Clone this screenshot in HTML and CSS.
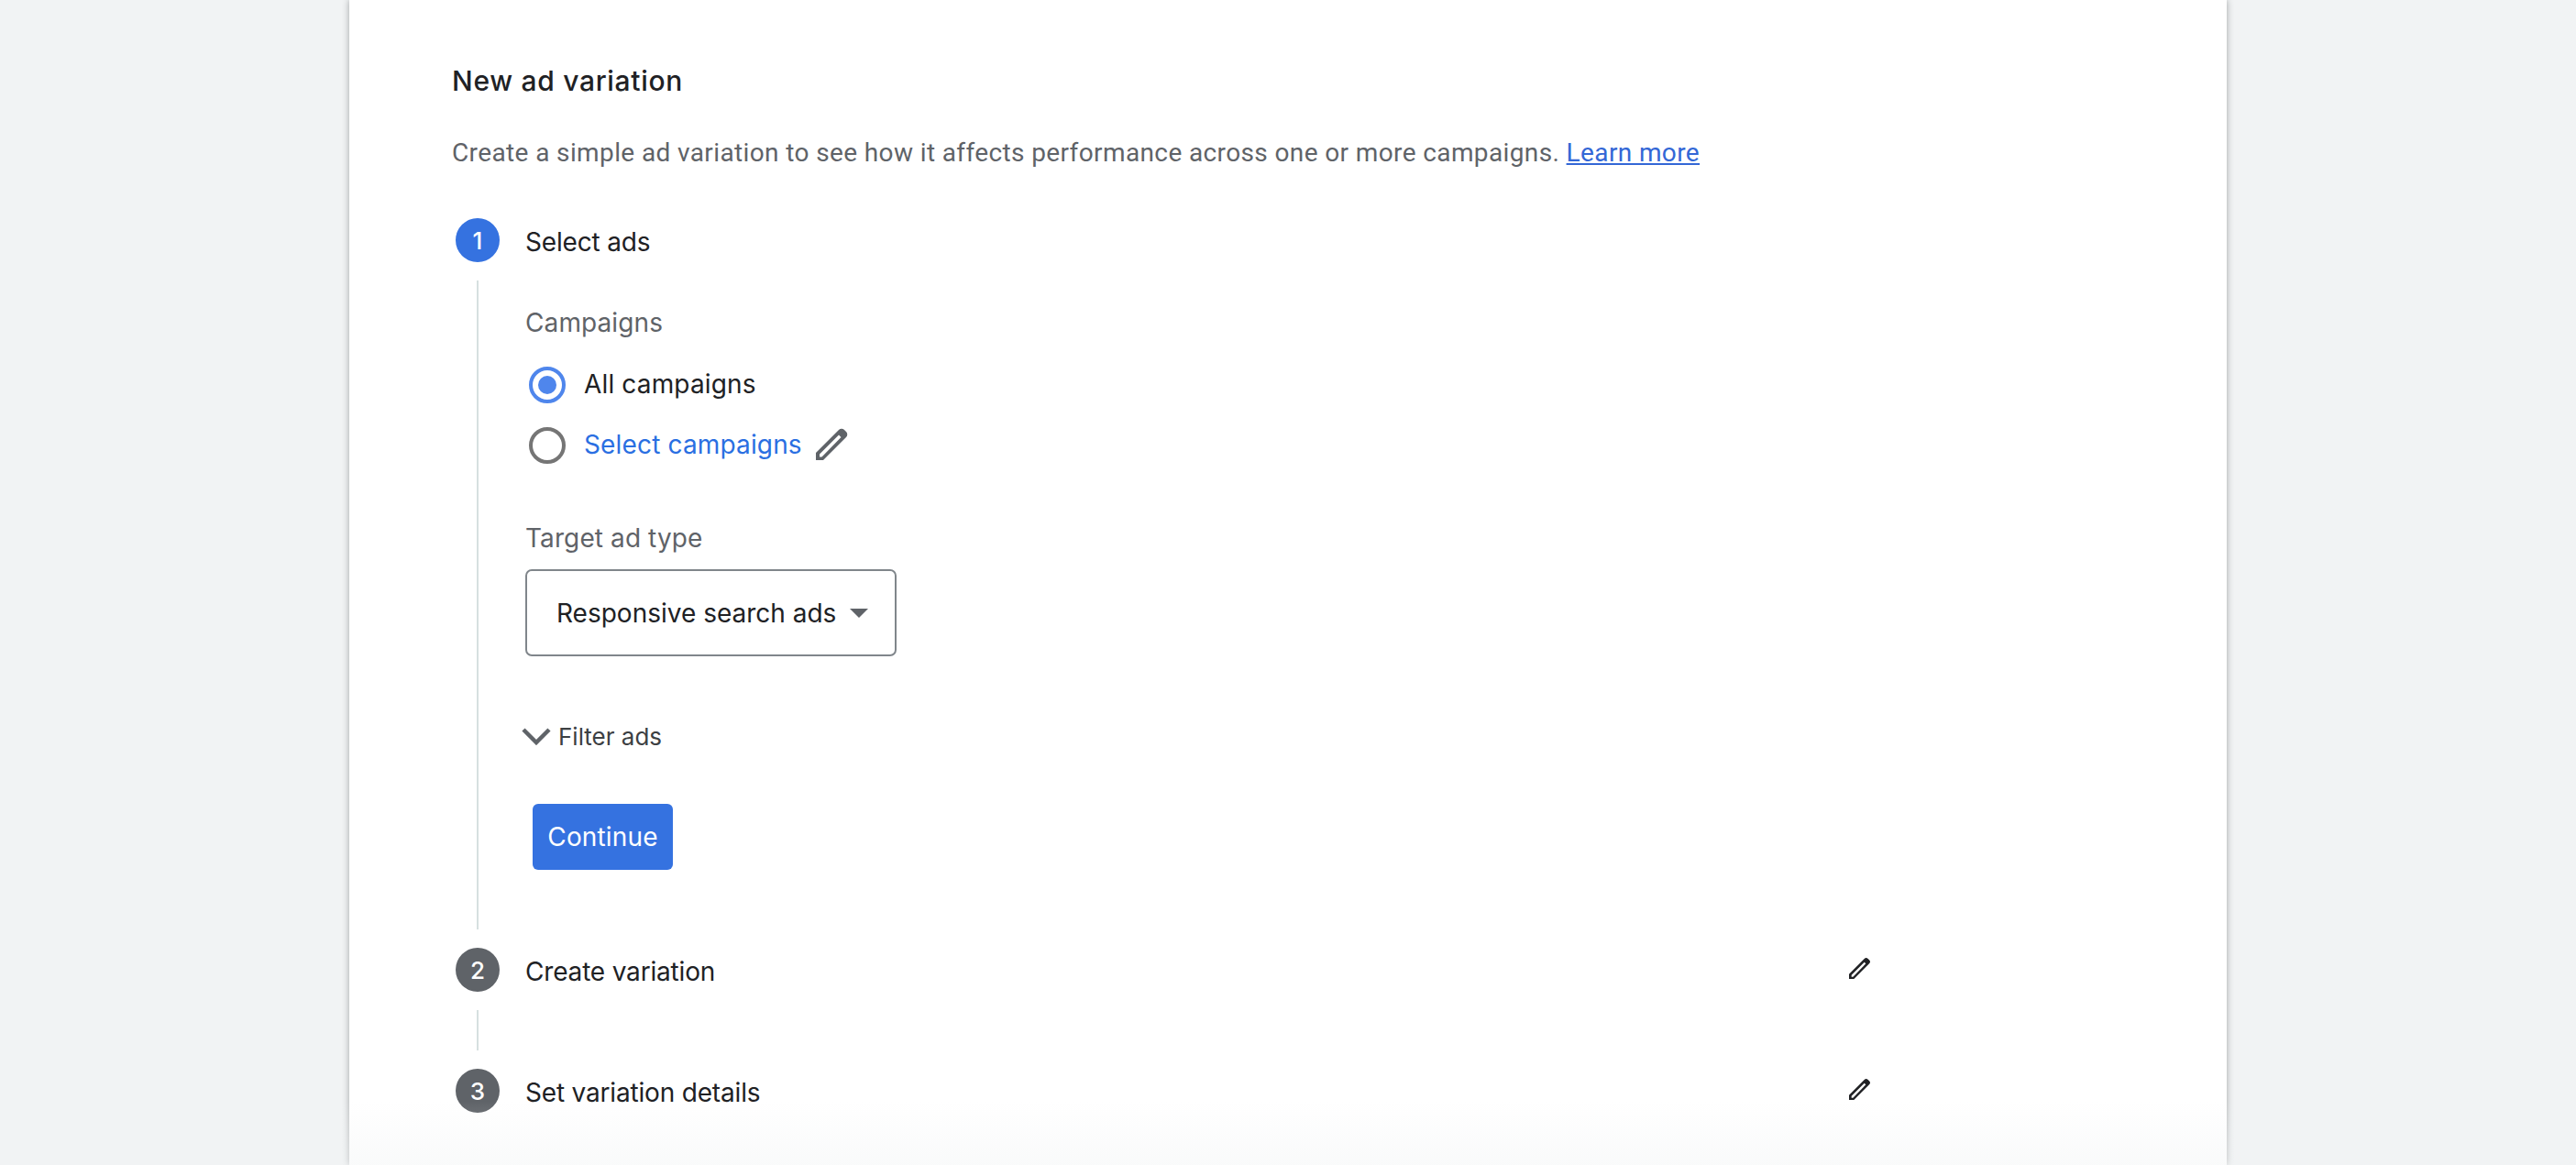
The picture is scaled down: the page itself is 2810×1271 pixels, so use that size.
FILE: index.html
```html
<!DOCTYPE html>
<html lang="en">
<head>
<meta charset="utf-8">
<title>New ad variation</title>
<link rel="stylesheet" href="styles.css">
</head>
<body>
<main class="card">
  <h1 class="title">New ad variation</h1>
  <p class="desc">Create a simple ad variation to see how it affects performance across one or more campaigns. <a class="learn" href="#">Learn more</a></p>

  <section class="step step-first">
    <div class="step-head">
      <span class="num num-active">1</span>
      <span class="step-title">Select ads</span>
    </div>
    <div class="step-body">
      <div class="label">Campaigns</div>
      <div class="radios">
        <div class="radio-row">
          <span class="radio radio-on"></span>
          <span class="radio-text">All campaigns</span>
        </div>
        <div class="radio-row">
          <span class="radio"></span>
          <span class="radio-text link">Select campaigns</span>
          <svg class="pencil pencil-lg" viewBox="0 0 36 36"><path fill-rule="evenodd" d="M0 36V28L25 3a4.2 4.2 0 0 1 6 0l2 2a4.2 4.2 0 0 1 0 6L8 36ZM4 32.500V29.500L25 8.500l2.500 2.500L6.500 32.500Z"/></svg>
        </div>
      </div>
      <div class="label label-target">Target ad type</div>
      <div class="select">
        <span>Responsive search ads</span>
        <span class="caret"></span>
      </div>
      <div class="filter">
        <svg class="chevron" viewBox="0 0 32 20"><path d="M2 3l14 14L30 3"/></svg>
        <span>Filter ads</span>
      </div>
      <button class="continue" type="button">Continue</button>
    </div>
  </section>

  <section class="step">
    <div class="step-head">
      <span class="num">2</span>
      <span class="step-title">Create variation</span>
      <svg class="pencil pencil-sm" viewBox="0 0 36 36"><path fill-rule="evenodd" d="M0 36V28L25 3a4.200 4.200 0 0 1 6 0l2 2a4.200 4.200 0 0 1 0 6L8 36ZM4 32.500V29.500L25 8.500l2.500 2.500L6.500 32.500Z"/></svg>
    </div>
    <div class="step-body step-body-empty"></div>
  </section>

  <section class="step">
    <div class="step-head">
      <span class="num">3</span>
      <span class="step-title">Set variation details</span>
      <svg class="pencil pencil-sm" viewBox="0 0 36 36"><path fill-rule="evenodd" d="M0 36V28L25 3a4.200 4.200 0 0 1 6 0l2 2a4.200 4.200 0 0 1 0 6L8 36ZM4 32.500V29.500L25 8.500l2.500 2.500L6.500 32.500Z"/></svg>
    </div>
  </section>
</main>
<div class="fade"></div>
</body>
</html>
```
FILE: styles.css
```css
* { box-sizing: border-box; }
html { height: 100%; overflow: hidden; }
body {
  margin: 0;
  height: 100%;
  background: #f1f3f4;
  display: flex;
  justify-content: flex-start;
  overflow: hidden;
  font-family: Inter, "Noto Sans", sans-serif;
  color: #202124;
}
.card {
  width: 2048px;
  height: 1271px;
  margin-left: 381px;
  background: #fff;
  box-shadow: 0 0 7px rgba(60, 64, 67, .45);
  padding: 68px 0 0 112px;
  flex: none;
}
.title {
  margin: 0;
  font-size: 30px;
  line-height: 40px;
  font-weight: 500;
  letter-spacing: .7px;
  color: #202124;
}
.desc {
  margin: 39px 0 0;
  font-family: Roboto, sans-serif;
  font-size: 28px;
  line-height: 40px;
  letter-spacing: .38px;
  color: #5f6368;
}
.learn { color: #3367d6; }
.step-first { margin-top: 51px; }
.step-head {
  display: flex;
  align-items: center;
  height: 48px;
  margin-left: 4px;
  position: relative;
}
.num {
  width: 48px;
  height: 48px;
  border-radius: 50%;
  background: #5f6368;
  color: #fff;
  display: flex;
  align-items: center;
  justify-content: center;
  font-size: 26px;
  font-weight: 500;
  flex: none;
}
.num-active { background: #3572e0; }
.step-title {
  margin-left: 28px;
  font-size: 28px;
  line-height: 36px;
  letter-spacing: -.18px;
  padding-top: 3px;
}
.step-body {
  margin: 20px 0 20px 27px;
  border-left: 2px solid #d6e0e0;
  padding-left: 51px;
  height: 708px;
}
.step-body-empty { height: 44px; }
.label {
  font-size: 28px;
  line-height: 36px;
  letter-spacing: .1px;
  color: #5f6368;
  padding-top: 28px;
  height: 65px;
}
.radios {
  display: flex;
  flex-direction: column;
  gap: 26px;
  margin-top: 29px;
  padding-left: 4px;
}
.radio-row {
  display: flex;
  align-items: center;
  height: 40px;
}
.radio {
  width: 40px;
  height: 40px;
  border-radius: 50%;
  border: 4px solid #757575;
  flex: none;
  position: relative;
}
.radio-on { border-color: #4f86ec; }
.radio-on::after {
  content: "";
  position: absolute;
  inset: 6px;
  border-radius: 50%;
  background: #4f86ec;
}
.radio-text {
  margin-left: 20px;
  font-size: 28px;
  line-height: 36px;
  letter-spacing: .15px;
  padding-bottom: 2px;
}
.link { color: #2a6fe2; }
.pencil { fill: #202124; display: block; flex: none; }
.pencil-lg { width: 36px; height: 36px; margin-left: 15px; fill: #5f6368; margin-top: -4px; }
.pencil-sm { width: 24px; height: 24px; position: absolute; left: 1520px; top: 10px; }
.label-target { margin-top: 63px; height: 42px; padding-top: 0; }
.select {
  width: 405px;
  height: 95px;
  border: 2px solid #80868b;
  border-radius: 7px;
  margin-top: 10px;
  display: flex;
  align-items: center;
  padding-left: 32px;
  font-size: 28px;
}
.caret {
  width: 0;
  height: 0;
  margin-left: 15px;
  border-left: 10px solid transparent;
  border-right: 10px solid transparent;
  border-top: 10px solid #5f6368;
}
.filter {
  display: flex;
  align-items: center;
  margin-top: 69px;
  margin-left: -4px;
  height: 36px;
  font-size: 26px;
  color: #3c4043;
}
.chevron {
  width: 32px;
  height: 20px;
  margin-right: 8px;
  fill: none;
  stroke: #5f6368;
  stroke-width: 4.500;
}
.continue {
  display: block;
  margin: 56px 0 0 8px;
  width: 153px;
  height: 72px;
  border: 0;
  border-radius: 6px;
  background: #3572e0;
  color: #fff;
  font-family: inherit;
  font-size: 28px;
  letter-spacing: .15px;
  padding: 0;
}
.fade {
  position: absolute;
  left: 0;
  right: 0;
  bottom: 0;
  height: 70px;
  background: linear-gradient(rgba(241, 243, 244, 0), rgba(241, 243, 244, .4));
  pointer-events: none;
}
```
